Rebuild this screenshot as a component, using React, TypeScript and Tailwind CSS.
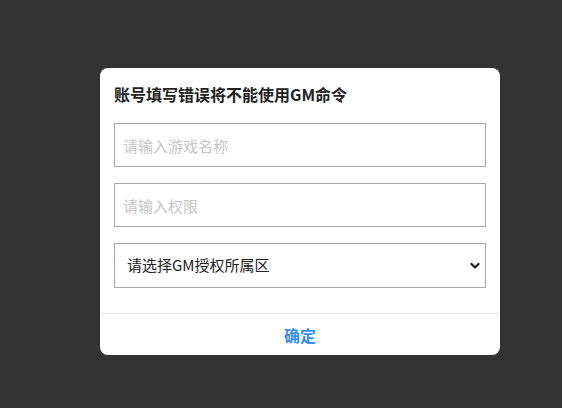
const FONT = "font-['Noto_Sans_CJK_SC','Noto_Sans',sans-serif]";

function Chevron() {
  return (
    <svg
      className="pointer-events-none absolute right-[6px] top-1/2 -translate-y-1/2"
      width="10"
      height="8"
      viewBox="0 0 10 8"
      fill="none"
    >
      <path d="M1.5 2 L5 5.5 L8.5 2" stroke="#1f1f1f" strokeWidth="2.2" strokeLinecap="round" strokeLinejoin="round" />
    </svg>
  );
}

export default function App() {
  return (
    <div className={`min-h-[408px] w-full bg-[#333333] pt-[68px] pl-[100px] ${FONT}`}>
      <div className="w-[400px] overflow-hidden rounded-[8px] bg-white">
        <div className="px-[14px] pt-[14px] pb-[25px]">
          <h2 className="text-[16px] leading-6 font-bold text-[#222]">
            账号填写错误将不能使用GM命令
          </h2>
          <div className="mt-[17px] flex flex-col gap-4">
            <input
              placeholder="请输入游戏名称"
              className="h-[44px] w-full border border-[#a9a9a9] px-[8px] text-[15px] text-[#333] outline-none placeholder:text-[#c4c4c4]"
            />
            <input
              placeholder="请输入权限"
              className="h-[44px] w-full border border-[#a9a9a9] px-[8px] text-[15px] text-[#333] outline-none placeholder:text-[#c4c4c4]"
            />
            <div className="relative">
              <select className="h-[45px] w-full appearance-none border border-[#a9a9a9] bg-white pl-[12px] pr-[24px] text-[15px] text-[#222] outline-none">
                <option>请选择GM授权所属区</option>
              </select>
              <Chevron />
            </div>
          </div>
        </div>
        <div className="flex h-[42px] items-center justify-center border-t border-[#e6e6e6]">
          <button className="text-[16px] leading-6 font-bold text-[#2f8ef4]">确定</button>
        </div>
      </div>
    </div>
  );
}
